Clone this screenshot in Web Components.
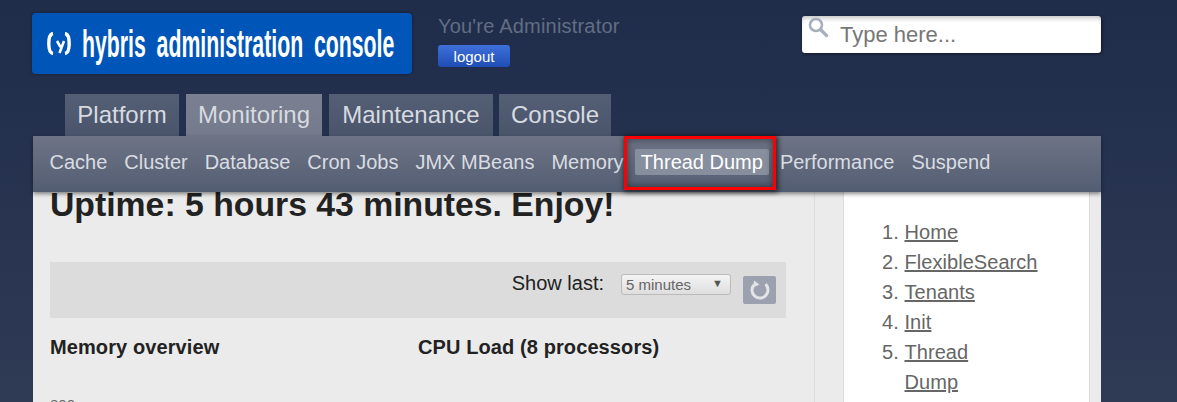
<!DOCTYPE html>
<html>
<head>
<meta charset="utf-8">
<title>hybris administration console</title>
<style>
    html, body {
        margin: 0;
        height: 402px;
        overflow: hidden;
    }
    body {
        background: linear-gradient(#1f2c4a, #2f3b55);
        font-family: "Liberation Sans", Arial, sans-serif;
    }
</style>
</head>
<body>
<hy-page>
    <hy-logo slot="logo">hybris administration console</hy-logo>
    <hy-user slot="user" name="You're Administrator"></hy-user>
    <hy-search slot="search">Type here...</hy-search>

    <hy-tab slot="tabs" style="width: 114px">Platform</hy-tab>
    <hy-tab slot="tabs" style="width: 136px" active>Monitoring</hy-tab>
    <hy-tab slot="tabs" style="width: 164px">Maintenance</hy-tab>
    <hy-tab slot="tabs" style="width: 112px; margin-left: -1px">Console</hy-tab>

    <hy-subitem slot="subnav">Cache</hy-subitem>
    <hy-subitem slot="subnav">Cluster</hy-subitem>
    <hy-subitem slot="subnav">Database</hy-subitem>
    <hy-subitem slot="subnav">Cron Jobs</hy-subitem>
    <hy-subitem slot="subnav">JMX MBeans</hy-subitem>
    <hy-subitem slot="subnav">Memory</hy-subitem>
    <hy-subitem slot="subnav" active>Thread Dump</hy-subitem>
    <hy-subitem slot="subnav">Performance</hy-subitem>
    <hy-subitem slot="subnav">Suspend</hy-subitem>

    <hy-dashboard slot="main"></hy-dashboard>
    <hy-steps slot="side"></hy-steps>
</hy-page>

<script>
class HyPage extends HTMLElement {
    constructor() {
        super();
        this.attachShadow({ mode: 'open' });
        this.shadowRoot.innerHTML = `
            <style>
                :host {
                    display: block;
                    width: 1068px;
                    margin-left: 33px;
                }
                #top {
                    display: flex;
                    height: 94px;
                    margin-left: -1px;
                }
                #logo { display: block; margin-top: 13px; }
                #user { display: block; margin: 13px 0 0 26px; width: 364px; }
                #search { display: block; margin-top: 16px; }
                #tabs {
                    display: flex;
                    gap: 7px;
                    height: 42px;
                    padding-left: 32px;
                }
                #subnav {
                    position: relative;
                    z-index: 2;
                    display: flex;
                    align-items: flex-start;
                    gap: 5px;
                    height: 56px;
                    box-sizing: border-box;
                    padding: 13px 0 0 10.5px;
                    background: linear-gradient(#6e7486, #535d72);
                    box-shadow: 0 2px 4px rgba(0, 0, 0, 0.45);
                }
                #body {
                    display: grid;
                    grid-template-columns: 782px 28px 247px 11px;
                    height: 210px;
                    overflow: hidden;
                    background: #ebebeb;
                }
                #main { min-width: 0; border-right: 1px solid #dcdcdc; }
                #side {
                    background: #fff;
                    border-left: 1px solid #dcdcdc;
                    border-right: 1px solid #dcdcdc;
                }
            </style>
            <div id="top">
                <div id="logo"><slot name="logo"></slot></div>
                <div id="user"><slot name="user"></slot></div>
                <div id="search"><slot name="search"></slot></div>
            </div>
            <div id="tabs"><slot name="tabs"></slot></div>
            <div id="subnav"><slot name="subnav"></slot></div>
            <div id="body">
                <div id="main"><slot name="main"></slot></div>
                <div></div>
                <div id="side"><slot name="side"></slot></div>
                <div></div>
            </div>
        `;
    }
}

class HyLogo extends HTMLElement {
    constructor() {
        super();
        this.attachShadow({ mode: 'open' });
        this.shadowRoot.innerHTML = `
            <style>
                :host {
                    display: flex;
                    align-items: center;
                    width: 380px;
                    height: 61px;
                    box-sizing: border-box;
                    padding-left: 15px;
                    overflow: hidden;
                    background: #0056b8;
                    border-radius: 4px;
                    box-shadow: 0 0 3px rgba(0, 0, 0, 0.4);
                    color: #fff;
                }
                svg { flex: none; margin: 0 11px 0 0; }
                span {
                    flex: none;
                    display: block;
                    font: bold 38px/1 "Liberation Sans", Arial, sans-serif;
                    word-spacing: 8.6px;
                    white-space: nowrap;
                    transform: scaleX(0.56);
                    transform-origin: left center;
                }
            </style>
            <svg width="24" height="24" viewBox="0 0 24 24" fill="none" stroke="#fff">
                <path d="M6 1.500C2.500 2 1.800 6 1.800 11.500S2.500 21 6 21.500" stroke-width="3.400"/>
                <path d="M18 1.500C21.500 2 22.200 6 22.200 11.500S21.500 21 18 21.500" stroke-width="3.400"/>
                <path d="M10 9l3.500 6M17 9l-4.500 12" stroke-width="2.600"/>
            </svg>
            <span><slot></slot></span>
        `;
    }
}

class HyUser extends HTMLElement {
    constructor() {
        super();
        this.attachShadow({ mode: 'open' });
        this.shadowRoot.innerHTML = `
            <style>
                :host {
                    display: block;
                    font-family: "Liberation Sans", Arial, sans-serif;
                }
                #name {
                    font-size: 20px;
                    letter-spacing: 0.2px;
                    line-height: 26px;
                    color: #626e84;
                }
                #logout {
                    display: block;
                    width: 72px;
                    height: 22px;
                    margin-top: 6px;
                    font-size: 15px;
                    line-height: 23px;
                    text-align: center;
                    color: #fff;
                    background: linear-gradient(#3e70da, #1f4db5);
                    border-radius: 3px;
                }
            </style>
            <div id="name">${this.getAttribute('name')}</div>
            <span id="logout">logout</span>
        `;
    }
}

class HySearch extends HTMLElement {
    constructor() {
        super();
        this.attachShadow({ mode: 'open' });
        this.shadowRoot.innerHTML = `
            <style>
                :host {
                    display: flex;
                    width: 299px;
                    height: 37px;
                    box-sizing: border-box;
                    padding-left: 5px;
                    background: #fff;
                    border-radius: 3px;
                    box-shadow: inset 0 5px 5px -3px rgba(0, 0, 0, 0.25), 1px 1px 3px rgba(0, 0, 0, 0.5);
                }
                svg { flex: none; margin-top: 1px; }
                span {
                    margin-left: 11px;
                    font: 22px/38px "Liberation Sans", Arial, sans-serif;
                    color: #777;
                }
            </style>
            <svg width="22" height="22" viewBox="0 0 22 22" fill="none" stroke="#a8aebb">
                <circle cx="9" cy="8" r="6" stroke-width="2.600"/>
                <path d="M13.500 12.500l6 6" stroke-width="3.200" stroke-linecap="round"/>
            </svg>
            <span><slot></slot></span>
        `;
    }
}

class HyTab extends HTMLElement {
    constructor() {
        super();
        this.attachShadow({ mode: 'open' });
        this.shadowRoot.innerHTML = `
            <style>
                :host {
                    display: block;
                    flex: none;
                    font: 24px/42px "Liberation Sans", Arial, sans-serif;
                    text-align: center;
                    color: #d7dbe0;
                    background: linear-gradient(#545e74, #4a556c);
                }
                :host([active]) {
                    background: linear-gradient(#7a8091, #747b8d);
                }
            </style>
            <slot></slot>
        `;
    }
}

class HySubitem extends HTMLElement {
    constructor() {
        super();
        this.attachShadow({ mode: 'open' });
        this.shadowRoot.innerHTML = `
            <style>
                :host {
                    position: relative;
                    display: block;
                    padding: 0 6px;
                    font: 20px/26px "Liberation Sans", Arial, sans-serif;
                    color: #d9dde2;
                    border-radius: 2px;
                }
                :host([active]) {
                    color: #fff;
                    background: #878e9d;
                }
                /* red callout drawn on the screenshot */
                :host([active])::after {
                    content: "";
                    position: absolute;
                    top: -13px;
                    left: -11px;
                    right: -7px;
                    bottom: -15px;
                    border: 3px solid #f00;
                    box-shadow: 1px 1px 5px 1px rgba(0, 0, 0, 0.65), inset 0 0 6px 1px rgba(0, 0, 0, 0.4);
                }
            </style>
            <slot></slot>
        `;
    }
}

class HyDashboard extends HTMLElement {
    constructor() {
        super();
        this.attachShadow({ mode: 'open' });
        this.shadowRoot.innerHTML = `
            <style>
                :host {
                    display: block;
                    padding: 0 28px 0 17px;
                    color: #222;
                    font-family: "Liberation Sans", Arial, sans-serif;
                }
                h1 {
                    margin: -7px 0 38px;
                    font-size: 33.750px;
                    line-height: 39px;
                }
                #bar {
                    display: flex;
                    justify-content: flex-end;
                    height: 56px;
                    box-sizing: border-box;
                    padding-right: 10px;
                    background: #dcdcdc;
                }
                #label {
                    margin-top: 9px;
                    font-size: 20px;
                    line-height: 24px;
                }
                #select {
                    display: flex;
                    justify-content: space-between;
                    width: 110px;
                    height: 21px;
                    box-sizing: border-box;
                    margin: 12px 12px 0 17px;
                    padding: 0 7px 0 4px;
                    font-size: 15px;
                    line-height: 20px;
                    color: #666;
                    background: linear-gradient(#f4f4f4, #dedede);
                    border: 1px solid #bbb;
                    border-radius: 3px;
                }
                #arrow { font-size: 11px; color: #555; line-height: 17px; }
                #refresh {
                    display: flex;
                    align-items: center;
                    justify-content: center;
                    width: 33px;
                    height: 28px;
                    margin-top: 14px;
                    background: #9ba1af;
                    border-radius: 2px;
                }
                #charts {
                    display: grid;
                    grid-template-columns: 368px 1fr;
                    margin-top: 17px;
                }
                h2 {
                    margin: 0;
                    font-size: 20px;
                    letter-spacing: 0.1px;
                    line-height: 24px;
                }
                #axis {
                    margin-top: 37px;
                    font-size: 15px;
                    line-height: 17px;
                    color: #666;
                }
            </style>
            <h1>Uptime: 5 hours 43 minutes. Enjoy!</h1>
            <div id="bar">
                <span id="label">Show last:</span>
                <div id="select"><span>5 minutes</span><span id="arrow">&#9660;</span></div>
                <div id="refresh">
                    <svg width="22" height="22" viewBox="0 0 22 22" fill="none" stroke="#e2e4e7" stroke-width="3">
                        <path d="M16.500 5.200A8 8 0 1 1 4.800 6"/>
                        <path d="M5 1.500l5.500 4-6.500 3z" fill="#e2e4e7" stroke="none"/>
                    </svg>
                </div>
            </div>
            <div id="charts">
                <h2>Memory overview</h2>
                <h2>CPU Load (8 processors)</h2>
            </div>
            <div id="axis">800</div>
        `;
    }
}

class HySteps extends HTMLElement {
    constructor() {
        super();
        this.attachShadow({ mode: 'open' });
        const steps = ['Home', 'FlexibleSearch', 'Tenants', 'Init', 'Thread Dump'];
        this.shadowRoot.innerHTML = `
            <style>
                :host {
                    display: block;
                    padding: 25px 0 0 60.500px;
                    font: 20px/30px "Liberation Sans", Arial, sans-serif;
                    letter-spacing: 0.05px;
                    color: #666;
                }
                ol {
                    width: 115px;
                    margin: 0;
                    padding: 0;
                }
                a { color: #666; text-decoration: underline; }
            </style>
            <ol>${steps.map(s => `<li><a href="#">${s}</a></li>`).join('')}</ol>
        `;
    }
}

customElements.define('hy-page', HyPage);
customElements.define('hy-logo', HyLogo);
customElements.define('hy-user', HyUser);
customElements.define('hy-search', HySearch);
customElements.define('hy-tab', HyTab);
customElements.define('hy-subitem', HySubitem);
customElements.define('hy-dashboard', HyDashboard);
customElements.define('hy-steps', HySteps);
</script>
</body>
</html>
